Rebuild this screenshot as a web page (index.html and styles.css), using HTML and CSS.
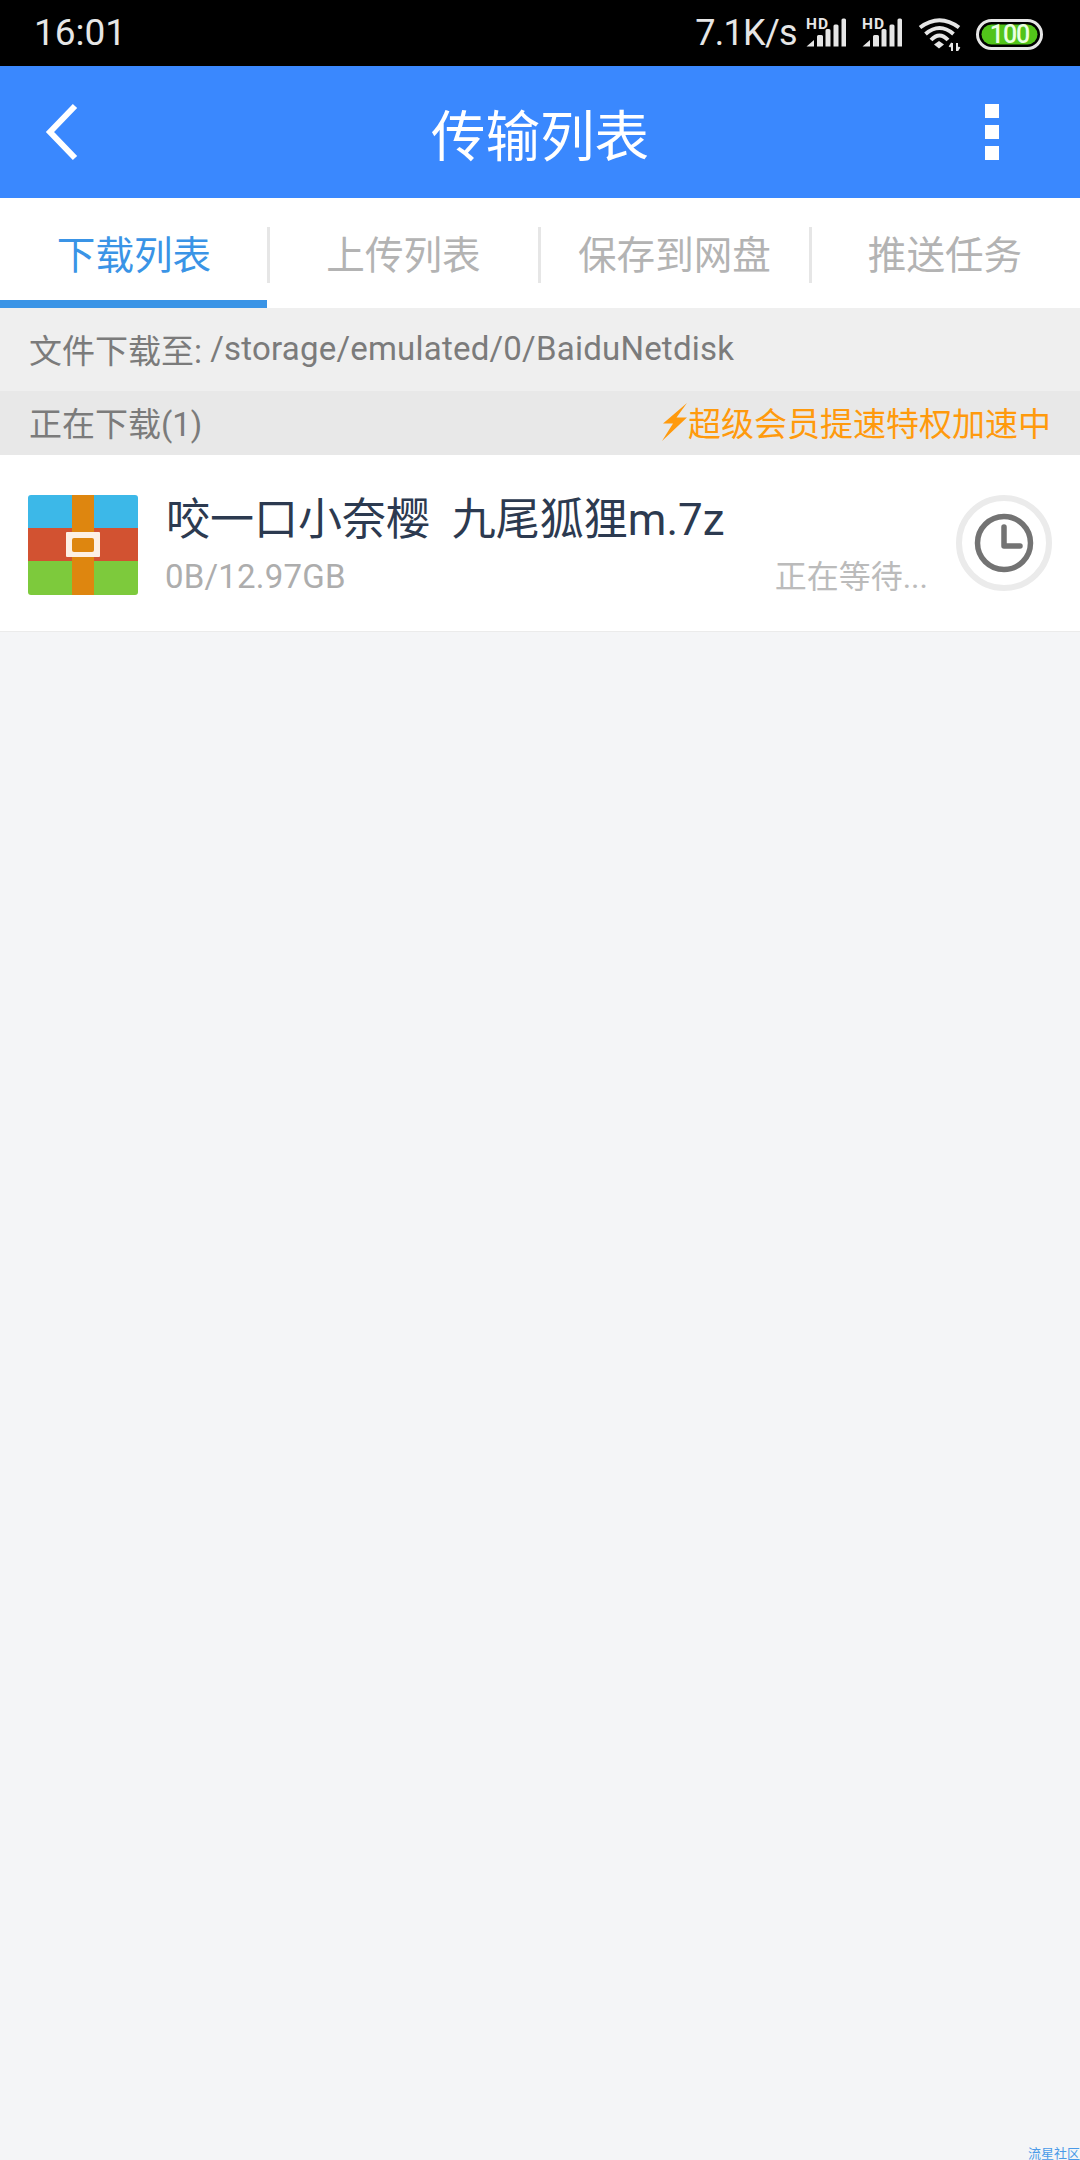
FILE: index.html
```html
<!DOCTYPE html>
<html lang="zh">
<head>
<meta charset="utf-8">
<title>传输列表</title>
<link rel="stylesheet" href="styles.css">
</head>
<body>
<div class="page">
  <div class="status">
    <span class="time">16:01</span>
    <div class="status-right">
      <span class="speed">7.1K/s</span>
      <svg class="sig" width="40" height="34" viewBox="0 0 40 34"><text x="0" y="14" class="hd">HD</text><path d="M0.500 31.500L8 25V31.500Z M11 31.500V21.500q0-1.500 1.500-1.500h3q1.500 0 1.500 1.500V31.500Z M19.500 31.500V15.500q0-1.500 1.500-1.500h2q1.500 0 1.500 1.500V31.500Z M27.500 31.500V11q0-1.500 1.500-1.500h2q1.500 0 1.500 1.500V31.500Z M35.500 31.500V5q0-1.500 1.500-1.500h1.500q1.500 0 1.500 1.500V31.500Z" fill="#e6e6e6"/></svg>
      <svg class="sig" width="40" height="34" viewBox="0 0 40 34"><text x="0" y="14" class="hd">HD</text><path d="M0.500 31.500L8 25V31.500Z M11 31.500V21.500q0-1.500 1.500-1.500h3q1.500 0 1.500 1.500V31.500Z M19.500 31.500V15.500q0-1.500 1.500-1.500h2q1.500 0 1.500 1.500V31.500Z M27.500 31.500V11q0-1.500 1.500-1.500h2q1.500 0 1.500 1.500V31.500Z M35.500 31.500V5q0-1.500 1.500-1.500h1.500q1.500 0 1.500 1.500V31.500Z" fill="#e6e6e6"/></svg>
      <svg class="wifi" width="43" height="34" viewBox="0 0 43 34" fill="none" stroke="#e6e6e6" stroke-width="4"><path d="M2 10.500Q21.500 -4 41 10.500"/><path d="M7.500 17Q21.500 5 35.500 17"/><path d="M13 23Q21.500 14 30 23"/><path d="M16 27.500L21 24L26 27.500L21 31.500Z" fill="#e6e6e6" stroke="none"/><path d="M34 34V26M31.500 30l2.500-4M39 34V26M39 34l2.500-4" stroke-width="2"/></svg>
      <svg class="batt" width="68" height="31" viewBox="0 0 68 31"><rect x="1.500" y="1.500" width="64" height="28" rx="14" fill="none" stroke="#e6e6e6" stroke-width="3"/><rect x="5.500" y="5.500" width="56" height="20" rx="10" fill="#52c41a"/><text x="33.500" y="24" class="batt-num">100</text></svg>
    </div>
  </div>

  <header class="bar">
    <div class="bar-side">
      <svg width="34" height="58" viewBox="0 0 34 58" fill="none" stroke="#fff" stroke-width="6"><path d="M31 3L6 29L31 55"/></svg>
    </div>
    <h1 class="bar-title">传输列表</h1>
    <div class="bar-side bar-side-right">
      <div class="dots"><i></i><i></i><i></i></div>
    </div>
  </header>

  <nav class="tabs">
    <div class="tab tab-on">下载列表</div>
    <div class="tab">上传列表</div>
    <div class="tab">保存到网盘</div>
    <div class="tab">推送任务</div>
  </nav>

  <div class="path">文件下载至: <span class="latin">/storage/emulated/0/BaiduNetdisk</span></div>

  <div class="section">
    <span>正在下载(1)</span>
    <span class="vip">
      <svg width="26" height="38" viewBox="0 0 26 38"><path d="M25 0L1 20.500H11L0 38L25 14.500H14.500Z" fill="#ff9a0d"/></svg>超级会员提速特权加速中
    </span>
  </div>

  <div class="row">
    <svg class="zip" width="110" height="100" viewBox="0 0 110 100">
      <rect width="110" height="33" fill="#3cb8e8"/>
      <rect y="33" width="110" height="33" fill="#d25231"/>
      <rect y="66" width="110" height="34" fill="#7dca3c"/>
      <rect x="44" width="22" height="100" fill="#de860f"/>
      <rect x="38" y="37" width="34" height="25" rx="1" fill="#fdf0e4"/>
      <rect x="44" y="43" width="22" height="14" rx="2" fill="#de860f"/>
    </svg>
    <div class="row-body">
      <div class="name">咬一口小奈樱&nbsp;&nbsp;九尾狐狸m.7z</div>
      <div class="meta">
        <span class="size">0B/12.97GB</span>
        <span class="wait">正在等待...</span>
      </div>
    </div>
    <svg class="clock" width="96" height="96" viewBox="0 0 96 96" fill="none">
      <circle cx="48" cy="48" r="45" stroke="#ebebeb" stroke-width="6"/>
      <circle cx="48" cy="48" r="26.500" stroke="#737373" stroke-width="5.500"/>
      <path d="M48 32V51H64" stroke="#737373" stroke-width="5.500" stroke-linecap="round" stroke-linejoin="round"/>
    </svg>
  </div>

  <div class="mark">流星社区</div>
</div>
</body>
</html>
```

FILE: styles.css
```css
* { box-sizing: border-box; }
html, body { margin: 0; padding: 0; }
body { font-family: Roboto, "Noto Sans CJK SC", sans-serif; }
.page { position: relative; width: 1080px; height: 2160px; overflow: hidden; background: #f4f5f7; }

.status { height: 66px; background: #000; color: #e6e6e6; display: flex; justify-content: space-between; align-items: center; padding: 0 36px 0 34px; }
.time { font-size: 37px; line-height: 66px; }
.status-right { display: flex; align-items: center; }
.speed { font-size: 36px; line-height: 66px; letter-spacing: -0.7px; margin-right: 9px; }
.sig { margin-right: 16px; margin-top: -2px; }
.wifi { margin-right: 15px; margin-top: 2px; }
.batt { margin-top: 2px; }
.hd { font: 700 15.500px Roboto, sans-serif; fill: #e6e6e6; letter-spacing: 1px; }
.batt-num { font: 500 25px Roboto, sans-serif; fill: #eaffe2; text-anchor: middle; letter-spacing: -1px; }

.bar { height: 132px; background: #3a88fe; display: flex; align-items: center; justify-content: space-between; }
.bar-side { width: 200px; padding-left: 44px; display: flex; align-items: center; }
.bar-side-right { justify-content: flex-end; padding: 0 81px 0 0; }
.bar-title { margin: 0; font-size: 54.500px; font-weight: 400; color: #fff; }
.dots { display: flex; flex-direction: column; gap: 7px; }
.dots i { display: block; width: 14px; height: 14px; background: #fff; }

.tabs { height: 110px; background: #fff; display: grid; grid-template-columns: 268px 271px 271px 270px; padding-bottom: 2px; }
.tab { position: relative; display: flex; align-items: center; justify-content: center; font-size: 38.600px; color: #b3b3b3; }
.tab + .tab::before { content: ""; position: absolute; left: -1px; top: 29px; width: 3px; height: 56px; background: #e6e6e6; }
.tab-on { color: #3a94e6; }
.tab-on::after { content: ""; position: absolute; left: 0; bottom: -2px; width: 267px; height: 8px; background: #3a94e6; }

.path { height: 83px; background: #efefef; display: flex; align-items: center; padding: 0 0 2px 29px; font-size: 33px; color: #7b7b7b; white-space: pre; }
.latin { letter-spacing: 0.220px; }
.section { height: 64px; background: #e8e8e8; display: flex; align-items: center; justify-content: space-between; padding: 0 29px 3px 29px; font-size: 33px; color: #7b7b7b; }
.vip { display: flex; align-items: center; color: #ff9a0d; }
.vip svg { margin-right: 0; }

.row { height: 177px; background: #fff; border-bottom: 1px solid #ebebeb; display: flex; align-items: center; padding: 0 28px; }
.zip { flex: none; margin-top: 3px; border-radius: 3px; }
.row-body { flex: 1; min-width: 0; padding: 0 28px; margin-top: 2px; }
.name { font-size: 44px; line-height: 60px; margin-bottom: 5px; color: #2c3a50; white-space: nowrap; }
.meta { display: flex; justify-content: space-between; font-size: 33px; line-height: 44px; color: #adadad; }
.size { letter-spacing: 0.200px; margin-left: -1px; }
.wait { font-size: 32px; color: #bbb; }
.clock { flex: none; margin-top: 0; }

.mark { position: absolute; right: 0; bottom: 0; font-size: 13px; line-height: 13px; color: #4a9ae8; }
```
